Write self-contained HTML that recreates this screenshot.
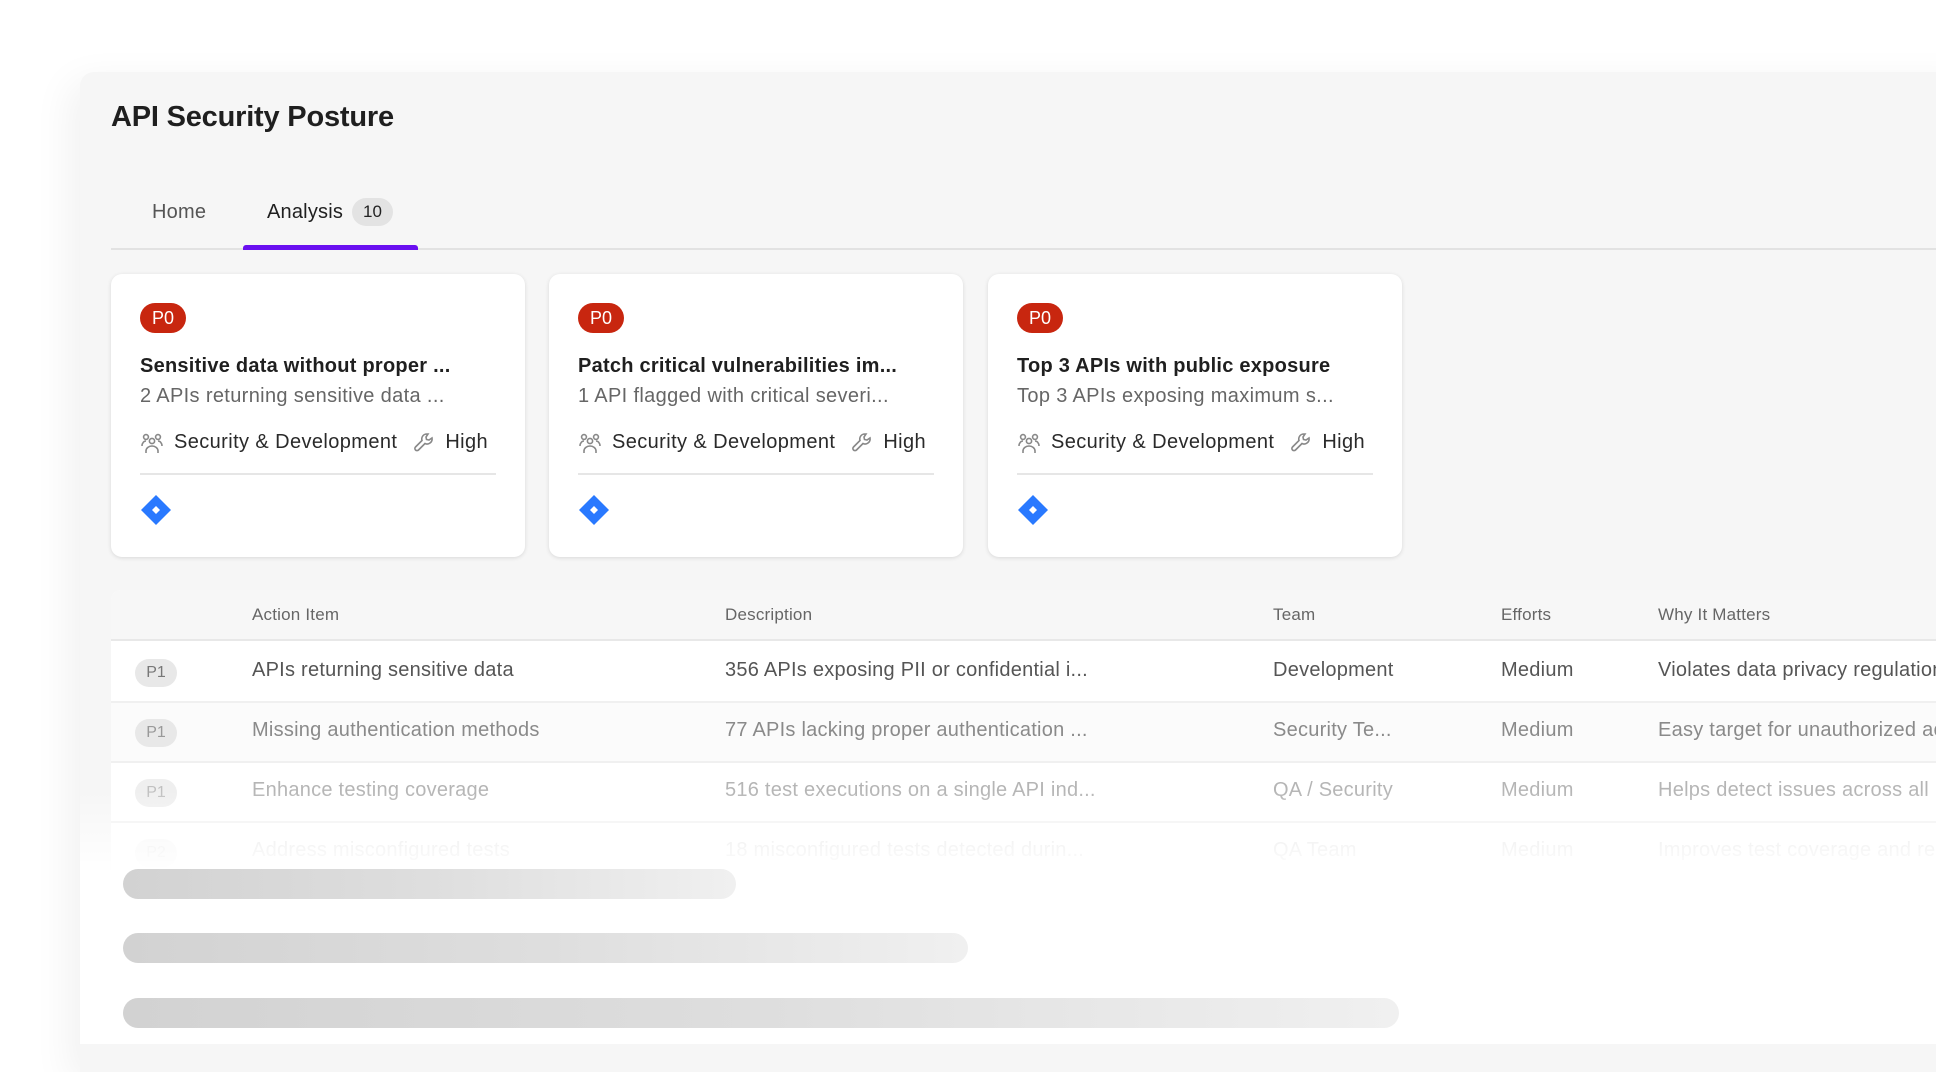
<!DOCTYPE html>
<html><head><meta charset="utf-8"><style>
*{box-sizing:border-box;margin:0;padding:0}
body{width:1936px;height:1044px;background:#fff;overflow:hidden;position:relative;font-family:"Liberation Sans",Arial,sans-serif;}
.panel{position:absolute;left:80px;top:72px;width:1900px;height:1000px;background:#f6f6f6;border-radius:14px 0 0 0;box-shadow:-10px 10px 40px rgba(0,0,0,0.06);}
.title{position:absolute;left:111px;top:101px;font-size:29px;font-weight:bold;color:#1f1f1f;letter-spacing:-0.2px}
.tab{position:absolute;top:201px;font-size:20px;color:#555;letter-spacing:0.2px}
.badge{position:absolute;left:352px;top:198px;width:41px;height:28px;border-radius:14px;background:#e3e3e3;font-size:17px;color:#222;text-align:center;line-height:28px}
.divider{position:absolute;left:111px;top:248px;right:0;height:2px;background:#e2e2e2}
.uline{position:absolute;left:243px;top:245px;width:175px;height:5px;background:#6a0ff0;border-radius:3px 3px 0 0}
.card{position:absolute;top:274px;width:414px;height:283px;background:#fff;border-radius:11px;box-shadow:0 1px 4px rgba(0,0,0,0.12)}
.p0{position:absolute;left:29px;top:29px;width:46px;height:30px;border-radius:15px;background:#c8260f;color:#fff;font-size:18px;text-align:center;line-height:30px}
.ct{position:absolute;left:29px;top:81px;font-size:20px;font-weight:bold;color:#1f1f1f;white-space:nowrap;letter-spacing:0.25px}
.cd{position:absolute;left:29px;top:111px;font-size:20px;color:#666;white-space:nowrap;letter-spacing:0.35px}
.meta{position:absolute;left:29px;top:157px;font-size:20px;color:#2a2a2a;white-space:nowrap;display:flex;align-items:center;letter-spacing:0.4px}
.meta svg{margin-right:10px}
.hr{position:absolute;left:29px;top:199px;width:356px;height:2px;background:#e6e6e6}
.dia{position:absolute;left:29px;top:220px}
.table{position:absolute;left:111px;top:590px;right:0;height:280px;background:#fff;border-radius:10px 0 0 0}
.thead{position:absolute;left:0;right:0;top:0;height:51px;background:#f7f7f7;border-bottom:2px solid #e8e8e8;border-radius:10px 0 0 0}
.th{position:absolute;top:15px;font-size:17px;color:#666;letter-spacing:0.2px}
.row{position:absolute;left:0;right:0;height:60px;border-bottom:2px solid #f0f0f0}
.row span{position:absolute;top:16px;font-size:20px;white-space:nowrap;letter-spacing:0.25px}
.pb{position:absolute;left:24px;width:42px;height:28px;border-radius:14px;background:#e8e8e8;font-size:16px!important;text-align:center;line-height:28px;top:16px!important;letter-spacing:0!important}
.fade{position:absolute;left:80px;right:0;top:790px;height:100px;background:linear-gradient(rgba(255,255,255,0),#fff 85%)}
.bar{position:absolute;left:123px;height:30px;border-radius:15px;background:linear-gradient(90deg,#d2d2d2,#dedede 50%,#f0f0f0)}
</style></head><body>
<div class="panel"></div>
<div class="title">API Security Posture</div>
<div class="tab" style="left:152px">Home</div>
<div class="tab" style="left:267px;color:#1f1f1f">Analysis</div>
<div class="badge">10</div>
<div class="divider"></div>
<div class="uline"></div>

<div class="card" style="left:111px">
<div class="p0">P0</div>
<div class="ct">Sensitive data without proper ...</div>
<div class="cd">2 APIs returning sensitive data ...</div>
<div class="meta"><svg width="24" height="22" viewBox="0 0 24 22" fill="none" stroke="#888" stroke-width="1.6"><circle cx="6" cy="5" r="2.4"/><circle cx="18" cy="5" r="2.4"/><circle cx="12" cy="9" r="2.6"/><path d="M2 14c0-3 2-5 4-5M22 14c0-3-2-5-4-5M6 21v-2c0-3 3-5 6-5s6 2 6 5v2"/></svg>Security &amp; Development<svg style="margin-left:16px" width="22" height="22" viewBox="0 0 22 22" fill="none" stroke="#888" stroke-width="1.6"><path d="M14 2a5 5 0 0 0-5 6.5L2.5 15a2 2 0 0 0 3 3L12 11.5A5 5 0 0 0 19 6l-3 2-2.5-.5L13 5l2-3z"/></svg>High</div>
<div class="hr"></div>
<svg class="dia" width="32" height="32" viewBox="0 0 32 32"><path d="M16 1L31 16 16 31 1 16z" fill="#2979ff"/><path d="M16 12L20 16 16 20 12 16z" fill="#fff"/></svg>
</div>
<div class="card" style="left:549px">
<div class="p0">P0</div>
<div class="ct">Patch critical vulnerabilities im...</div>
<div class="cd">1 API flagged with critical severi...</div>
<div class="meta"><svg width="24" height="22" viewBox="0 0 24 22" fill="none" stroke="#888" stroke-width="1.6"><circle cx="6" cy="5" r="2.4"/><circle cx="18" cy="5" r="2.4"/><circle cx="12" cy="9" r="2.6"/><path d="M2 14c0-3 2-5 4-5M22 14c0-3-2-5-4-5M6 21v-2c0-3 3-5 6-5s6 2 6 5v2"/></svg>Security &amp; Development<svg style="margin-left:16px" width="22" height="22" viewBox="0 0 22 22" fill="none" stroke="#888" stroke-width="1.6"><path d="M14 2a5 5 0 0 0-5 6.5L2.5 15a2 2 0 0 0 3 3L12 11.5A5 5 0 0 0 19 6l-3 2-2.5-.5L13 5l2-3z"/></svg>High</div>
<div class="hr"></div>
<svg class="dia" width="32" height="32" viewBox="0 0 32 32"><path d="M16 1L31 16 16 31 1 16z" fill="#2979ff"/><path d="M16 12L20 16 16 20 12 16z" fill="#fff"/></svg>
</div>
<div class="card" style="left:988px">
<div class="p0">P0</div>
<div class="ct">Top 3 APIs with public exposure</div>
<div class="cd">Top 3 APIs exposing maximum s...</div>
<div class="meta"><svg width="24" height="22" viewBox="0 0 24 22" fill="none" stroke="#888" stroke-width="1.6"><circle cx="6" cy="5" r="2.4"/><circle cx="18" cy="5" r="2.4"/><circle cx="12" cy="9" r="2.6"/><path d="M2 14c0-3 2-5 4-5M22 14c0-3-2-5-4-5M6 21v-2c0-3 3-5 6-5s6 2 6 5v2"/></svg>Security &amp; Development<svg style="margin-left:16px" width="22" height="22" viewBox="0 0 22 22" fill="none" stroke="#888" stroke-width="1.6"><path d="M14 2a5 5 0 0 0-5 6.5L2.5 15a2 2 0 0 0 3 3L12 11.5A5 5 0 0 0 19 6l-3 2-2.5-.5L13 5l2-3z"/></svg>High</div>
<div class="hr"></div>
<svg class="dia" width="32" height="32" viewBox="0 0 32 32"><path d="M16 1L31 16 16 31 1 16z" fill="#2979ff"/><path d="M16 12L20 16 16 20 12 16z" fill="#fff"/></svg>
</div>

<div class="table">
<div class="thead">
<div class="th" style="left:141px">Action Item</div>
<div class="th" style="left:614px">Description</div>
<div class="th" style="left:1162px">Team</div>
<div class="th" style="left:1390px">Efforts</div>
<div class="th" style="left:1547px">Why It Matters</div>
</div>
<div class="row" style="top:53px;color:#555">
<span class="pb" style="color:#777">P1</span><span style="left:141px">APIs returning sensitive data</span><span style="left:614px">356 APIs exposing PII or confidential i...</span><span style="left:1162px">Development</span><span style="left:1390px">Medium</span><span style="left:1547px">Violates data privacy regulations</span>
</div>
<div class="row" style="top:113px;color:#8a8a8a;background:#fbfbfb">
<span class="pb" style="color:#999">P1</span><span style="left:141px">Missing authentication methods</span><span style="left:614px">77 APIs lacking proper authentication ...</span><span style="left:1162px">Security Te...</span><span style="left:1390px">Medium</span><span style="left:1547px">Easy target for unauthorized access</span>
</div>
<div class="row" style="top:173px;color:#b5b5b5">
<span class="pb" style="color:#c0c0c0;background:#efefef">P1</span><span style="left:141px">Enhance testing coverage</span><span style="left:614px">516 test executions on a single API ind...</span><span style="left:1162px">QA / Security</span><span style="left:1390px">Medium</span><span style="left:1547px">Helps detect issues across all</span>
</div>
<div class="row" style="top:233px;color:#e2e2e2;border:none">
<span class="pb" style="color:#e6e6e6;background:#f6f6f6">P2</span><span style="left:141px">Address misconfigured tests</span><span style="left:614px">18 misconfigured tests detected durin...</span><span style="left:1162px">QA Team</span><span style="left:1390px">Medium</span><span style="left:1547px">Improves test coverage and re</span>
</div>
</div>
<div class="fade"></div>
<div style="position:absolute;left:80px;right:0;top:870px;bottom:0;background:#fff"></div>
<div class="bar" style="top:869px;width:613px"></div>
<div class="bar" style="top:933px;width:845px"></div>
<div class="bar" style="top:998px;width:1276px"></div>
</body></html>
